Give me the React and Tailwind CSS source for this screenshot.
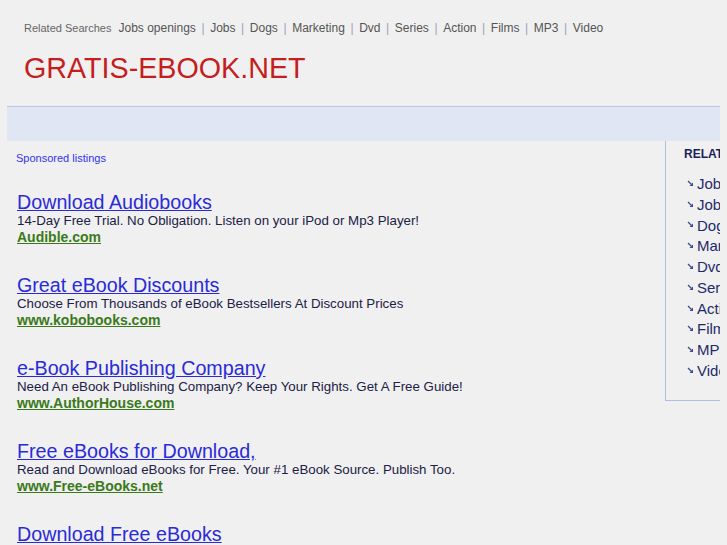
import React from "react";

const top = ["Jobs openings", "Jobs", "Dogs", "Marketing", "Dvd", "Series", "Action", "Films", "MP3", "Video"];

const ads = [
  ["Download Audiobooks", "14-Day Free Trial. No Obligation. Listen on your iPod or Mp3 Player!", "Audible.com"],
  ["Great eBook Discounts", "Choose From Thousands of eBook Bestsellers At Discount Prices", "www.kobobooks.com"],
  ["e-Book Publishing Company", "Need An eBook Publishing Company? Keep Your Rights. Get A Free Guide!", "www.AuthorHouse.com"],
  ["Free eBooks for Download,", "Read and Download eBooks for Free. Your #1 eBook Source. Publish Too.", "www.Free-eBooks.net"],
  ["Download Free eBooks", null, null],
];

const side = ["Jobs openings", "Jobs", "Dogs", "Marketing", "Dvd", "Series", "Action", "Films", "MP3", "Video"];

function Arrow() {
  return (
    <svg width="7" height="7" viewBox="0 0 7 7" className="shrink-0">
      <path d="M1 1 L4.5 4.5" stroke="#3a4a8a" strokeWidth="1.2" />
      <path d="M6 2.5 L6 6 L2.5 6 Z" fill="#3a4a8a" />
    </svg>
  );
}

export default function App() {
  return (
    <div className="h-[545px] w-[727px] overflow-hidden bg-[#f0f0f0]" style={{ fontFamily: '"Liberation Sans", Arial, sans-serif' }}>
      <div className="ml-[7px] w-[713px] overflow-hidden">
        <div className="pl-[17px] pt-[20px] flex items-center h-[36px]">
          <span className="text-[11px] leading-[16px] text-[#666] mr-[7px]">Related Searches</span>
          {top.map((t, i) => (
            <span key={t} className="flex items-center text-[12px] leading-[16px] text-[#555]">
              {i > 0 && <span className="px-[5.6px] text-[#a0a0b8]">|</span>}
              <span>{t}</span>
            </span>
          ))}
        </div>
        <div className="pl-[17px] mt-[16px] text-[28.7px] leading-[32px] text-[#c41e1e]">GRATIS-EBOOK.NET</div>
        <div className="mt-[22px] h-[35px] border-t border-[#b8c8e4] bg-[#e0e6f4]" />
        <div className="flex">
          <div className="w-[658px] shrink-0 pl-[9px] pt-[10px]">
            <div className="text-[11px] leading-[14px] text-[#3333ee]">Sponsored listings</div>
            <div className="mt-[26px] flex flex-col gap-[28px]">
              {ads.map(([t, d, u]) => (
                <div key={t} className="flex flex-col pl-[1px]">
                  <a className="text-[19.7px] leading-[22px] text-[#2a2ad8] underline">{t}</a>
                  {d && <div className="text-[13.3px] leading-[17px] text-[#202045] -mt-[1px]">{d}</div>}
                  {u && <a className="text-[14px] leading-[17px] font-bold text-[#3a7a1a] underline">{u}</a>}
                </div>
              ))}
            </div>
          </div>
          <div className="w-[200px] shrink-0 h-[260px] border-l border-b border-[#b0bfe0] pl-[18px] pt-[6px]">
            <div className="text-[12px] leading-[14px] font-bold text-[#1a1f5c]">RELATED SEARCHES</div>
            <div className="mt-[12px] flex flex-col">
              {side.map((s) => (
                <div key={s} className="flex items-center h-[20.8px] ml-[3px]">
                  <Arrow />
                  <span className="ml-[3px] text-[15px] leading-[21px] text-[#1f2a6b]">{s}</span>
                </div>
              ))}
            </div>
          </div>
        </div>
      </div>
    </div>
  );
}
